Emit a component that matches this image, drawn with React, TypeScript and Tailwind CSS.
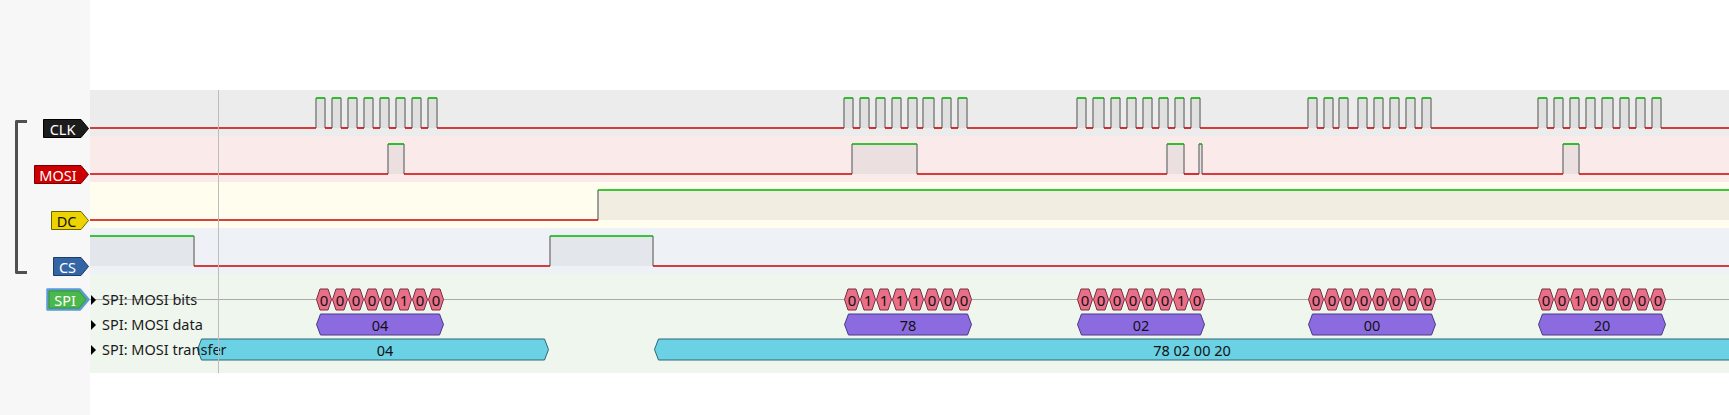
import React from "react";

const OX = 90;
const W = 1639;
const HY = 8;
const LY = 38;

type WaveProps = { init: 0 | 1; toggles: number[]; fill: string };

function Wave({ init, toggles, fill }: WaveProps) {
  const pts = [OX, ...toggles, OX + W + 2];
  const segs: React.ReactNode[] = [];
  const fills: React.ReactNode[] = [];
  for (let i = 0; i < pts.length - 1; i++) {
    const level = (init ^ (i % 2)) as 0 | 1;
    const a = pts[i] - OX;
    const b = pts[i + 1] - OX;
    if (level === 1) {
      fills.push(<rect key={"f" + i} x={a} y={HY} width={b - a} height={LY - HY} fill={fill} />);
      segs.push(<line key={"s" + i} x1={a} x2={b} y1={HY} y2={HY} stroke="#00b400" strokeWidth={1.6} />);
    } else {
      segs.push(<line key={"s" + i} x1={a} x2={b} y1={LY} y2={LY} stroke="#cc0000" strokeWidth={1.6} />);
    }
  }
  const edges = toggles.map((t, i) => (
    <line key={"e" + i} x1={t - OX} x2={t - OX} y1={HY} y2={LY} stroke="#949494" strokeWidth={1.8} />
  ));
  return (
    <svg width={W} height={46} className="block">
      {fills}
      {edges}
      {segs}
    </svg>
  );
}

function pulses(starts: number[], wide: number[] = []) {
  const out: number[] = [];
  starts.forEach((s) => {
    out.push(s, s + (wide.includes(s) ? 11 : 9));
  });
  return out;
}

const B1 = [316, 332, 348, 364, 380, 396, 412, 428];
const B2 = [844, 860, 876, 892, 908, 923, 942, 958];
const B3 = [1077, 1093, 1111, 1127, 1143, 1159, 1175, 1191];
const B4 = [1308, 1324, 1339, 1358, 1374, 1390, 1406, 1422];
const B5 = [1538, 1554, 1570, 1586, 1602, 1620, 1636, 1652];

const CLK = [
  ...pulses(B1),
  ...pulses(B2, [923]),
  ...pulses(B3, [1093]),
  ...pulses(B4),
  ...pulses(B5, [1602]),
];
const MOSI = [388, 404, 852, 917, 1167, 1184, 1199, 1202, 1563, 1579];
const DC = [598];
const CS = [194, 550, 653];

const BYTES = [
  { s: 316, bits: "00000100", hex: "04" },
  { s: 844, bits: "01111000", hex: "78" },
  { s: 1077, bits: "00000010", hex: "02" },
  { s: 1308, bits: "00000000", hex: "00" },
  { s: 1538, bits: "00100000", hex: "20" },
];

function hexPts(x1: number, x2: number, d: number) {
  const t = 2;
  const b = 23;
  const m = 12.5;
  return `${x1},${m} ${x1 + d},${t} ${x2 - d},${t} ${x2},${m} ${x2 - d},${b} ${x1 + d},${b}`;
}

function Hex({
  x1,
  x2,
  fill,
  stroke,
  text,
  tx,
  d = 4,
  fs = 14.5,
}: {
  x1: number;
  x2: number;
  fill: string;
  stroke: string;
  text: string;
  tx?: number;
  d?: number;
  fs?: number;
}) {
  const a = x1 - OX;
  const b = x2 - OX;
  return (
    <g>
      <polygon points={hexPts(a + 0.5, b - 0.5, d)} fill={fill} stroke={stroke} strokeWidth={1} />
      <text
        x={tx !== undefined ? tx - OX : (a + b) / 2}
        y={13}
        textAnchor="middle"
        dominantBaseline="central"
        fontFamily="'Noto Sans', sans-serif"
        fontSize={fs}
        fill="#111"
      >
        {text}
      </text>
    </g>
  );
}

function Tag({
  w,
  h = 19,
  fill,
  stroke,
  text,
  color,
}: {
  w: number;
  h?: number;
  fill: string;
  stroke: string;
  text: string;
  color: string;
}) {
  return (
    <svg width={w} height={h} className="block">
      <polygon
        points={`0.5,0.5 ${w - 8},0.5 ${w - 0.5},${h / 2} ${w - 8},${h - 0.5} 0.5,${h - 0.5}`}
        fill={fill}
        stroke={stroke}
        strokeWidth={1}
      />
      <text
        x={(w - 7) / 2}
        y={h / 2 + 0.5}
        textAnchor="middle"
        dominantBaseline="central"
        fontFamily="'Noto Sans', sans-serif"
        fontSize={14.5}
        fill={color}
      >
        {text}
      </text>
    </svg>
  );
}

function SpiTag() {
  const w = 44;
  const h = 23;
  return (
    <svg width={w} height={h} className="block">
      <polygon
        points={`1.5,1.5 ${w - 10},1.5 ${w - 1.5},${h / 2} ${w - 10},${h - 1.5} 1.5,${h - 1.5}`}
        fill="#4cb84c"
        stroke="#5b9bd5"
        strokeWidth={2.5}
        strokeLinejoin="round"
      />
      <polygon
        points={`3,3 ${w - 11},3 ${w - 4},${h / 2} ${w - 11},${h - 3} 3,${h - 3}`}
        fill="#4cb84c"
        stroke="#2f8f2f"
        strokeWidth={0.8}
      />
      <text
        x={19}
        y={h / 2 + 0.5}
        textAnchor="middle"
        dominantBaseline="central"
        fontFamily="'Noto Sans', sans-serif"
        fontSize={14.5}
        fill="#fff"
      >
        SPI
      </text>
    </svg>
  );
}

function DecoderRow({ label, children }: { label: string; children: React.ReactNode }) {
  return (
    <div className="relative h-[25px]">
      <svg width={W} height={25} className="block">
        {children}
      </svg>
      <div className="absolute left-0 top-0 flex h-[25px] items-center">
        <svg width={7} height={10} className="ml-[1px] block">
          <polygon points="0,0 5,5 0,10" fill="#000" />
        </svg>
        <span className="ml-[4px] text-[14.5px] leading-none text-[#1a1a1a]">{label}</span>
      </div>
    </div>
  );
}

export default function App() {
  return (
    <div className="flex h-[415px] w-[1729px] overflow-hidden bg-white font-['Noto_Sans',sans-serif]">
      {/* left header panel */}
      <div className="flex w-[90px] shrink-0 bg-[#f7f7f7]">
        <div className="pl-[15px] pt-[120px]">
          <div className="h-[154px] w-[12px] rounded-l-[2px] border-[3px] border-r-0 border-[#505050]" />
        </div>
        <div className="flex flex-1 flex-col items-end pr-[1px] pt-[119px]">
          <Tag w={46} fill="#1c1c1c" stroke="#000" text="CLK" color="#fff" />
          <div className="mt-[27px]">
            <Tag w={55} fill="#cc0000" stroke="#7a0000" text="MOSI" color="#fff" />
          </div>
          <div className="mt-[27px]">
            <Tag w={38} fill="#edd400" stroke="#6e6200" text="DC" color="#111" />
          </div>
          <div className="mt-[27px]">
            <Tag w={36} fill="#3465a4" stroke="#1d3d68" text="CS" color="#fff" />
          </div>
          <div className="mr-[-1px] mt-[12px]">
            <SpiTag />
          </div>
        </div>
      </div>

      {/* trace area */}
      <div className="relative flex flex-1 flex-col">
        <div className="h-[90px] shrink-0" />
        <div className="h-[46px] bg-[#ececec]">
          <Wave init={0} toggles={CLK} fill="#e0e0e0" />
        </div>
        <div className="h-[46px] bg-[#fbeaea]">
          <Wave init={0} toggles={MOSI} fill="#ecdfdf" />
        </div>
        <div className="h-[46px] bg-[#fffdee]">
          <Wave init={0} toggles={DC} fill="#f1eee1" />
        </div>
        <div className="h-[46px] bg-[#eef1f6]">
          <Wave init={1} toggles={CS} fill="#e3e6eb" />
        </div>
        <div className="bg-[#eef6ee] pb-[11px] pt-[13px]">
          <DecoderRow label="SPI: MOSI bits">
            <line x1={0} x2={W} y1={12.5} y2={12.5} stroke="#aaaaaa" strokeWidth={1} />
            {BYTES.map((b) =>
              b.bits.split("").map((bit, i) => (
                <Hex
                  key={b.s + "-" + i}
                  x1={b.s + i * 16}
                  x2={b.s + i * 16 + 16}
                  fill="#e96f89"
                  stroke="#7a2d3e"
                  text={bit}
                  d={3.5}
                  fs={15}
                />
              ))
            )}
          </DecoderRow>
          <DecoderRow label="SPI: MOSI data">
            {BYTES.map((b) => (
              <Hex key={b.s} x1={b.s} x2={b.s + 128} fill="#8c6be0" stroke="#4a3a86" text={b.hex} />
            ))}
          </DecoderRow>
          <DecoderRow label="SPI: MOSI transfer">
            <Hex x1={197} x2={549} fill="#6bd2e5" stroke="#2e6775" text="04" tx={385} />
            <Hex x1={654} x2={1760} fill="#6bd2e5" stroke="#2e6775" text="78 02 00 20" tx={1192} />
          </DecoderRow>
        </div>
        <div className="flex-1" />
        {/* cursor */}
        <div className="absolute left-[128px] top-[90px] h-[283px] w-px bg-[#bdbdbd]" />
      </div>
    </div>
  );
}
